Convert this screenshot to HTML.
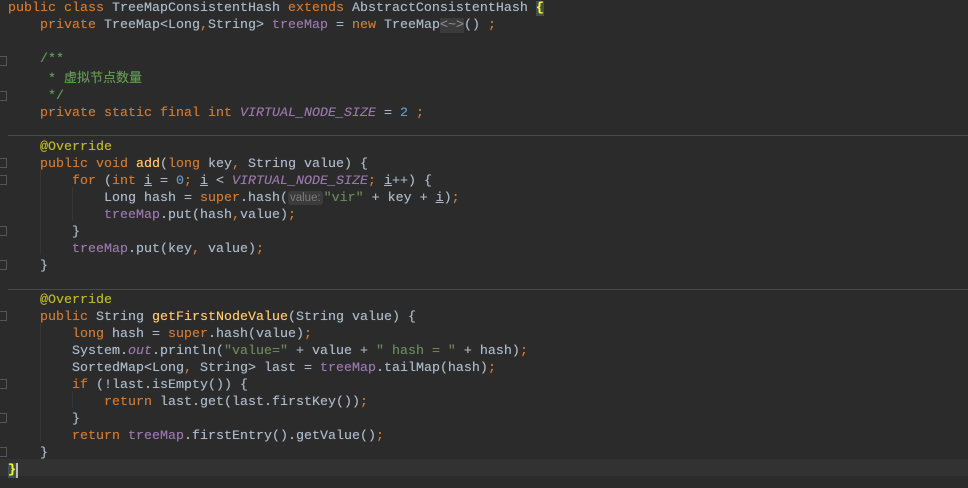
<!DOCTYPE html>
<html><head><meta charset="utf-8">
<style>
html,body{margin:0;padding:0;background:#2b2b2b;width:968px;height:488px;overflow:hidden;}
#ed{position:relative;width:968px;height:488px;background:#2b2b2b;}
pre{margin:0;position:absolute;left:8px;top:0;font-family:"Liberation Mono","Noto Sans CJK SC",monospace;font-size:13.33px;line-height:17px;color:#a9b7c6;text-shadow:0 0 0.4px currentColor;}
.k{color:#cc7832}.f{color:#9876aa}.fi{color:#9876aa;font-style:italic}.a{color:#bbb529}.c{color:#629755}.s{color:#6a8759}.n{color:#6897bb}.m{color:#ffc66d}
.u{text-decoration:underline}
.cj{font-family:"Noto Sans CJK SC",sans-serif;font-size:13px;}
.hint{display:inline-block;background:#3b3b3b;color:#7a7a7a;font-family:"Liberation Sans",sans-serif;font-size:11.5px;line-height:14px;border-radius:3px;padding:0 2px;margin:0 1px 0 0;text-shadow:none;}
.dia{background:#3b3b3b;color:#888}
.br{color:#ffef28;font-weight:bold;background:#3b514d}
.sep{position:absolute;left:8px;right:0;height:1px;background:#4a4a4a;}
.cur{position:absolute;left:0;right:0;top:459px;height:17px;background:#323232;}
.g{position:absolute;width:1px;background:#363636;}
.fold{position:absolute;left:0;width:6px;height:8px;border:1px solid #555;border-left:none;}
</style></head><body><div id="ed">
<div class="cur"></div>
<div class="sep" style="top:135px"></div>
<div class="sep" style="top:289px"></div>
<div class="g" style="left:72px;top:187px;height:34px"></div>
<div class="g" style="left:72px;top:391px;height:17px"></div>
<div class="g" style="left:40px;top:170px;height:85px"></div>
<div class="g" style="left:40px;top:323px;height:119px"></div>
<div class="fold" style="top:56px"></div>
<div class="fold" style="top:91px"></div>
<div class="fold" style="top:158px"></div>
<div class="fold" style="top:175px"></div>
<div class="fold" style="top:226px"></div>
<div class="fold" style="top:260px"></div>
<div class="fold" style="top:311px"></div>
<div class="fold" style="top:379px"></div>
<div class="fold" style="top:413px"></div>
<div class="fold" style="top:447px"></div>
<pre><span class="k">public class</span> TreeMapConsistentHash <span class="k">extends</span> AbstractConsistentHash <span class="br">{</span>
    <span class="k">private</span> TreeMap&lt;Long<span class="k">,</span>String&gt; <span class="f">treeMap</span> = <span class="k">new</span> TreeMap<span class="dia">&lt;~&gt;</span>() <span class="k">;</span>

    <span class="c">/**</span>
<span class="c">     * <span class="cj">虚拟节点数量</span></span>
<span class="c">     */</span>
    <span class="k">private static final int</span> <span class="fi">VIRTUAL_NODE_SIZE</span> = <span class="n">2</span> <span class="k">;</span>

    <span class="a">@Override</span>
    <span class="k">public void</span> <span class="m">add</span>(<span class="k">long</span> key<span class="k">,</span> String value) {
        <span class="k">for</span> (<span class="k">int</span> <span class="u">i</span> = <span class="n">0</span><span class="k">;</span> <span class="u">i</span> &lt; <span class="fi">VIRTUAL_NODE_SIZE</span><span class="k">;</span> <span class="u">i</span>++) {
            Long hash = <span class="k">super</span>.hash(<span class="hint">value:</span><span class="s">"vir"</span> + key + <span class="u">i</span>)<span class="k">;</span>
            <span class="f">treeMap</span>.put(hash<span class="k">,</span>value)<span class="k">;</span>
        }
        <span class="f">treeMap</span>.put(key<span class="k">,</span> value)<span class="k">;</span>
    }

    <span class="a">@Override</span>
    <span class="k">public</span> String <span class="m">getFirstNodeValue</span>(String value) {
        <span class="k">long</span> hash = <span class="k">super</span>.hash(value)<span class="k">;</span>
        System.<span class="fi">out</span>.println(<span class="s">"value="</span> + value + <span class="s">" hash = "</span> + hash)<span class="k">;</span>
        SortedMap&lt;Long<span class="k">,</span> String&gt; last = <span class="f">treeMap</span>.tailMap(hash)<span class="k">;</span>
        <span class="k">if</span> (!last.isEmpty()) {
            <span class="k">return</span> last.get(last.firstKey())<span class="k">;</span>
        }
        <span class="k">return</span> <span class="f">treeMap</span>.firstEntry().getValue()<span class="k">;</span>
    }
<span class="br">}</span><span style="border-left:2px solid #bbb;margin-left:0"></span></pre>
</div></body></html>
